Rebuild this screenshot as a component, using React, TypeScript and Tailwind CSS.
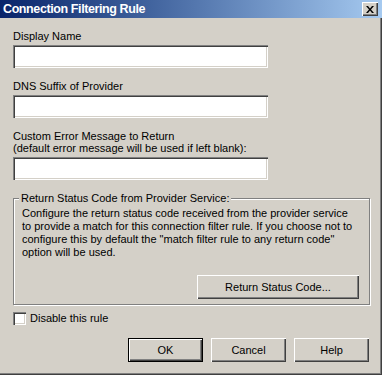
const raised =
  'bg-[#d4d0c8] shadow-[inset_1px_1px_0_#ffffff,inset_-1px_-1px_0_#404040,inset_-2px_-2px_0_#808080]';
const sunken =
  'bg-white shadow-[inset_1px_1px_0_#808080,inset_2px_2px_0_#404040,inset_-1px_-1px_0_#ffffff,inset_-2px_-2px_0_#d4d0c8]';

function Field({ className = '' }: { className?: string }) {
  return <div className={`${sunken} w-[255px] h-[23px] ${className}`} />;
}

function Button({ label, isDefault = false, width }: { label: string; isDefault?: boolean; width: string }) {
  return (
    <button
      className={`${width} h-[24px] flex items-center justify-center text-[11px] text-black ${
        isDefault
          ? 'bg-[#d4d0c8] border border-black shadow-[inset_1px_1px_0_#ffffff,inset_-1px_-1px_0_#404040,inset_-2px_-2px_0_#808080]'
          : raised
      }`}
    >
      {label}
    </button>
  );
}

export default function App() {
  return (
    <div className="w-[382px] h-[375px] flex flex-col bg-[#d4d0c8] font-['Liberation_Sans',Arial,sans-serif] text-[11px] leading-[13px] text-black shadow-[inset_-1px_-1px_0_#404040,inset_-2px_-2px_0_#808080] overflow-hidden">
      {/* title bar */}
      <div className="h-[18px] flex items-center justify-between pl-[3px] pr-[4px] bg-gradient-to-r from-[#0a246a] to-[#a6caf0]">
        <span className="text-white font-bold text-[12.5px] tracking-[-0.4px] leading-[18px]">
          Connection Filtering Rule
        </span>
        <div className={`${raised} w-[16px] h-[14px] flex items-center justify-center`}>
          <svg width="8" height="7" viewBox="0 0 8 7">
            <path d="M0 0h2l2 2.5L6 0h2L5 3.5 8 7H6L4 4.5 2 7H0l3-3.5z" fill="#000" />
          </svg>
        </div>
      </div>

      <div className="flex flex-col pt-[12px] px-[13px]">
        <div>Display Name</div>
        <Field className="mt-[2px]" />

        <div className="mt-[12px]">DNS Suffix of Provider</div>
        <Field className="mt-[2px]" />

        <div className="mt-[12px] leading-[12px]">
          Custom Error Message to Return
          <br />
          (default error message will be used if left blank):
        </div>
        <Field className="mt-[3px]" />

        {/* group box */}
        <div className="relative mt-[18px] w-[357px] h-[107px] border border-[#808080] shadow-[inset_1px_1px_0_#ffffff,1px_1px_0_#ffffff] flex flex-col pt-[8px] pl-[8px] pr-[10px]">
          <span className="absolute -top-[7px] left-[5px] bg-[#d4d0c8] px-[2px]">
            Return Status Code from Provider Service:
          </span>
          <p>
            Configure the return status code received from the provider service to provide a match for
            this connection filter rule. If you choose not to configure this by default the "match
            filter rule to any return code" option will be used.
          </p>
          <div className="flex justify-end mt-auto mb-[5px]">
            <Button label="Return Status Code..." width="w-[162px]" />
          </div>
        </div>

        <label className="flex items-center gap-[4px] mt-[7px]">
          <span className={`${sunken} w-[13px] h-[13px]`} />
          <span>Disable this rule</span>
        </label>

        <div className="flex justify-end gap-[8px] mt-[13px]">
          <Button label="OK" isDefault width="w-[75px]" />
          <Button label="Cancel" width="w-[75px]" />
          <Button label="Help" width="w-[75px]" />
        </div>
      </div>
    </div>
  );
}
